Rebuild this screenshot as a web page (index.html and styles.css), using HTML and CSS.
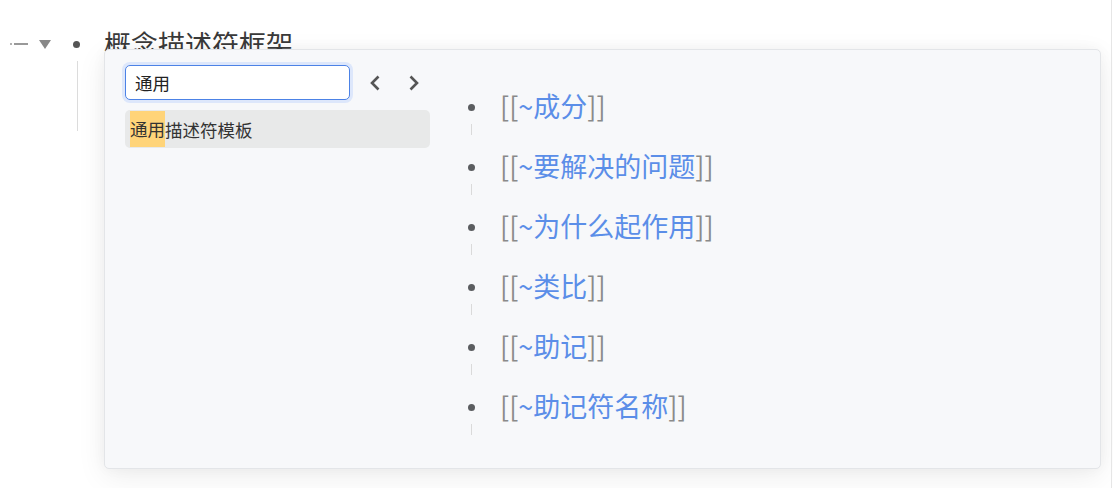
FILE: index.html
```html
<!DOCTYPE html>
<html lang="zh">
<head>
<meta charset="utf-8">
<link rel="stylesheet" href="styles.css">
</head>
<body>
<div class="page">
  <div class="block">
    <div class="head">
      <span class="dash"><i class="dot-s"></i><i class="bar"></i></span>
      <span class="tri"></span>
      <span class="bul"></span>
      <span class="title">概念描述符框架</span>
    </div>
    <div class="children"></div>
  </div>

  <div class="popover">
    <div class="left">
      <div class="search-row">
        <div class="input">通用</div>
        <span class="nav">
          <svg width="14" height="20" viewBox="0 0 14 20"><path d="M10.5 3.5 L4 10 L10.5 16.5" fill="none" stroke="#555" stroke-width="2.6"/></svg>
        </span>
        <span class="nav">
          <svg width="14" height="20" viewBox="0 0 14 20"><path d="M3.5 3.5 L10 10 L3.5 16.5" fill="none" stroke="#555" stroke-width="2.6"/></svg>
        </span>
      </div>
      <div class="result"><mark class="hl">通用</mark>描述符模板</div>
    </div>
    <ul class="list">
      <li class="item"><span class="mk"><i class="dot"></i><i class="vl"></i></span><span class="txt"><b class="br">[[</b><a class="ln">~成分</a><b class="br">]]</b></span></li>
      <li class="item"><span class="mk"><i class="dot"></i><i class="vl"></i></span><span class="txt"><b class="br">[[</b><a class="ln">~要解决的问题</a><b class="br">]]</b></span></li>
      <li class="item"><span class="mk"><i class="dot"></i><i class="vl"></i></span><span class="txt"><b class="br">[[</b><a class="ln">~为什么起作用</a><b class="br">]]</b></span></li>
      <li class="item"><span class="mk"><i class="dot"></i><i class="vl"></i></span><span class="txt"><b class="br">[[</b><a class="ln">~类比</a><b class="br">]]</b></span></li>
      <li class="item"><span class="mk"><i class="dot"></i><i class="vl"></i></span><span class="txt"><b class="br">[[</b><a class="ln">~助记</a><b class="br">]]</b></span></li>
      <li class="item"><span class="mk"><i class="dot"></i><i class="vl"></i></span><span class="txt"><b class="br">[[</b><a class="ln">~助记符名称</a><b class="br">]]</b></span></li>
    </ul>
  </div>
  <div class="edge"></div>
</div>
</body>
</html>
```
FILE: styles.css
```css
html, body {
  margin: 0;
  padding: 0;
  background: #fff;
}
body {
  font-family: "Noto Sans CJK SC", "Noto Sans", sans-serif;
  color: #222;
  width: 1113px;
  height: 488px;
  overflow: hidden;
}
.page {
  position: relative;
  width: 1113px;
  height: 488px;
}
.block {
  padding-top: 26px;
}
.head {
  display: flex;
  align-items: center;
  height: 36px;
}
.dash {
  display: flex;
  align-items: center;
  margin-left: 10px;
  width: 18px;
}
.dot-s {
  width: 2px;
  height: 2px;
  background: #999;
  border-radius: 1px;
  margin-right: 2px;
}
.bar {
  width: 14px;
  height: 1.5px;
  background: #999;
}
.tri {
  width: 0;
  height: 0;
  margin-left: 11px;
  border-left: 6px solid transparent;
  border-right: 6px solid transparent;
  border-top: 9px solid #888;
}
.bul {
  width: 7px;
  height: 7px;
  border-radius: 50%;
  background: #555;
  margin-left: 22px;
}
.title {
  margin-left: 24px;
  font-size: 27px;
  font-weight: 400;
  line-height: 36px;
  color: #3a3a3a;
}
.children {
  margin-left: 77px;
  margin-top: -1px;
  width: 1px;
  height: 70px;
  background: #dcdcdc;
}
.popover {
  position: absolute;
  left: 104px;
  top: 49px;
  width: 995px;
  height: 418px;
  background: #f7f8fa;
  border: 1px solid #e3e5e8;
  border-radius: 5px;
  box-shadow: 0 8px 30px rgba(0, 0, 0, 0.07), 0 0 14px rgba(0, 0, 0, 0.04);
  display: flex;
}
.left {
  width: 305px;
  padding: 15px 0 0 20px;
}
.search-row {
  display: flex;
  align-items: center;
}
.input {
  box-sizing: border-box;
  width: 225px;
  height: 35px;
  border: 1px solid #4c82e6;
  border-radius: 5px;
  box-shadow: 0 0 0 3px #dde7fb;
  background: #fff;
  font-size: 17.5px;
  line-height: 33px;
  padding-left: 9px;
  color: #222;
}
.nav {
  display: flex;
  align-items: center;
  justify-content: center;
  width: 14px;
  height: 20px;
  margin-left: 18px;
}
.nav + .nav {
  margin-left: 25px;
}
.result {
  margin-top: 10px;
  height: 38px;
  background: #e8e9e9;
  border-radius: 5px;
  display: flex;
  align-items: center;
  padding-left: 5px;
  font-size: 17.5px;
  color: #333;
}
.hl {
  background: #ffd479;
  color: #333;
  height: 36px;
  line-height: 36px;
  display: inline-block;
}
.list {
  list-style: none;
  margin: 0;
  padding: 38px 0 0 0;
  margin-left: 30px;
}
.item {
  display: flex;
  height: 60px;
}
.mk {
  position: relative;
  width: 40px;
  height: 60px;
  flex: none;
}
.dot {
  position: absolute;
  left: 8px;
  top: 16px;
  width: 7px;
  height: 7px;
  border-radius: 50%;
  background: #5b5d60;
}
.vl {
  position: absolute;
  left: 11px;
  top: 36px;
  width: 1px;
  height: 11px;
  background: #dadada;
}
.txt {
  font-size: 27px;
  line-height: 36px;
  white-space: nowrap;
}
.br {
  font-weight: normal;
  color: #8a8a8a;
}
.ln {
  color: #5b8ee8;
}
.edge {
  position: absolute;
  right: 1px;
  top: 0;
  width: 1px;
  height: 488px;
  background: #e6e6e6;
}
```
